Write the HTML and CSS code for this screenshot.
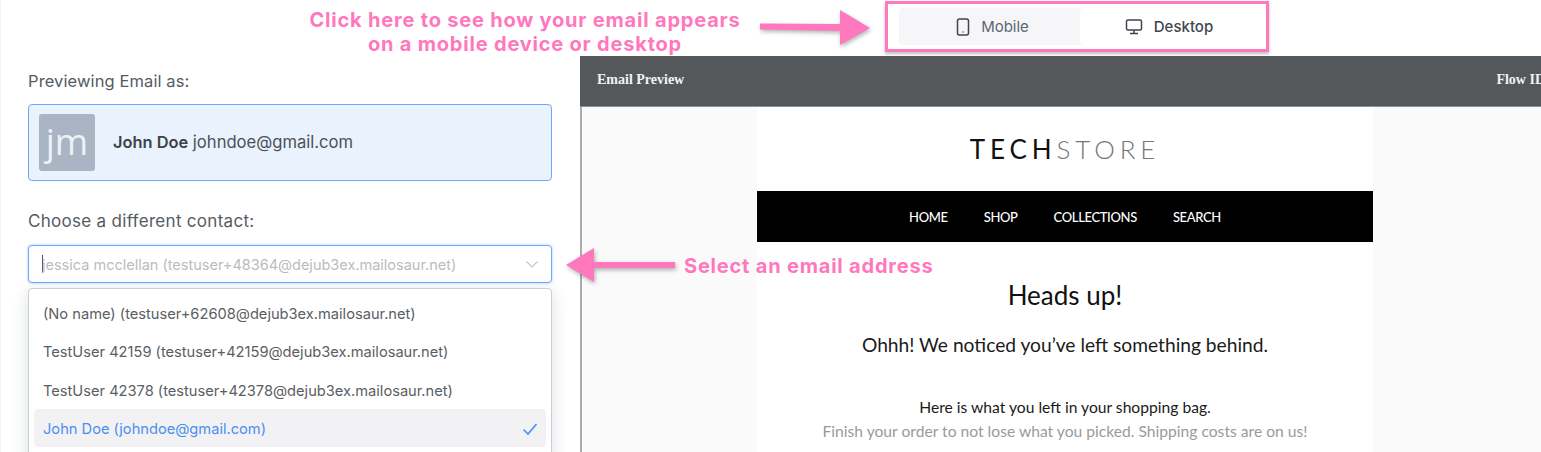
FILE: index.html
```html
<!DOCTYPE html>
<html lang="en">

<head>
    <meta charset="UTF-8">
    <title>Email Preview</title>
    <link rel="stylesheet" href="styles.css">
</head>

<body>
    <div class="app">
        <div class="sidebar">
            <div class="label">Previewing Email as:</div>
            <div class="contact-card">
                <div class="avatar">jm</div>
                <div class="contact-text"><b>John Doe</b> johndoe@gmail.com</div>
            </div>
            <div class="label label-second">Choose a different contact:</div>
            <div class="select-box">
                <span class="caret"></span>
                <span class="select-text">jessica mcclellan (testuser+48364@dejub3ex.mailosaur.net)</span>
                <svg class="chevron" width="14" height="14" viewBox="0 0 14 14" fill="none" stroke="#c4c4c4" stroke-width="1.1">
                    <path d="M1.5 4.5 7 10l5.5-5.5" />
                </svg>
            </div>
            <div class="dropdown">
                <div class="option">(No name) (testuser+62608@dejub3ex.mailosaur.net)</div>
                <div class="option">TestUser 42159 (testuser+42159@dejub3ex.mailosaur.net)</div>
                <div class="option">TestUser 42378 (testuser+42378@dejub3ex.mailosaur.net)</div>
                <div class="option option-active">
                    John Doe (johndoe@gmail.com)
                    <svg width="16" height="14" viewBox="0 0 16 14" fill="none" stroke="#4a8fee" stroke-width="1.6">
                        <path d="M1.5 7.5 6 12 14.5 2" />
                    </svg>
                </div>
            </div>
        </div>

        <div class="preview">
            <div class="preview-top">
                <div class="toggle">
                    <div class="toggle-item toggle-item-off">
                        <svg width="14" height="18" viewBox="0 0 14 18" fill="none" stroke="#3f4650" stroke-width="1.5">
                            <rect x="1.5" y="1" width="11" height="16" rx="2" />
                            <path d="M6.5 14h1" />
                        </svg>
                        Mobile
                    </div>
                    <div class="toggle-item toggle-item-on">
                        <svg width="18" height="16" viewBox="0 0 18 16" fill="none" stroke="#3f4650" stroke-width="1.5">
                            <rect x="1.5" y="1" width="15" height="10" rx="1.5" />
                            <path d="M9 11v3M5 14.5h8" />
                        </svg>
                        Desktop
                    </div>
                </div>
            </div>
            <div class="preview-header">
                <span>Email Preview</span>
                <span>Flow ID</span>
            </div>
            <div class="preview-body">
                <div class="email">
                    <div class="logo"><b>TECH</b>STORE</div>
                    <div class="email-nav">
                        <span>HOME</span>
                        <span>SHOP</span>
                        <span>COLLECTIONS</span>
                        <span>SEARCH</span>
                    </div>
                    <h1>Heads up!</h1>
                    <h2>Ohhh! We noticed you’ve left something behind.</h2>
                    <p>Here is what you left in your shopping bag.</p>
                    <p class="muted">Finish your order to not lose what you picked. Shipping costs are on us!</p>
                </div>
            </div>
        </div>
    </div>

    <!-- annotations on top of the screenshot -->
    <div class="note note-top">Click here to see how your email appears<br>on a mobile device or desktop</div>
    <div class="note note-select">Select an email address</div>
    <div class="pink-box"></div>
    <svg class="arrow arrow-top" width="112" height="44" viewBox="0 0 112 44">
        <path d="M1 20.5 81 21V7L111 25 81 42V28L1 26.5Z" fill="#ff77bd" />
    </svg>
    <svg class="arrow arrow-select" width="116" height="40" viewBox="0 0 116 40">
        <path d="M1 18 29 1V15H110V21H29V35Z" fill="#ff77bd" />
    </svg>
</body>

</html>
```

FILE: styles.css
```css
body {
    margin: 0;
    padding: 0;
    background-color: #fff;
    overflow: hidden;
    font-family: Inter, 'Noto Sans', sans-serif;
    position: relative;
    height: 452px;
}

.app {
    display: flex;
    height: 452px;
    overflow: hidden;
}

.sidebar {
    width: 580px;
    flex-shrink: 0;
    box-sizing: border-box;
    padding: 71px 28px 0 27px;
    border-left: 1px solid #f0f2f5;
    color: #555b63;
}

.label {
    font-size: 16.5px;
    letter-spacing: 0.1px;
    line-height: 20px;
}

.label-second {
    margin-top: 30px;
    font-size: 17px;
    letter-spacing: 0.3px;
}

.contact-card {
    display: flex;
    align-items: center;
    gap: 18px;
    height: 77px;
    box-sizing: border-box;
    margin-top: 13px;
    padding-left: 10px;
    width: 524px;
    background-color: #eaf2fe;
    border: 1px solid #6ea8fe;
    border-radius: 4px;
}

.avatar {
    width: 56px;
    height: 57px;
    background-color: #a9b5c4;
    border-radius: 3px;
    color: #eef1f5;
    font-family: 'Open Sans', sans-serif;
    font-size: 36px;
    line-height: 56px;
    text-align: center;
}

.contact-text {
    font-size: 16.6px;
    line-height: 20px;
    margin-top: -2px;
    color: #4b5158;
}

.contact-text b {
    font-weight: 600;
    font-size: 16.4px;
    color: #3d4248;
}

.select-box {
    display: flex;
    align-items: center;
    box-sizing: border-box;
    width: 524px;
    height: 38px;
    margin-top: 14px;
    padding: 0 12px 0 13px;
    background-color: #fff;
    border: 1px solid #6ea8fe;
    border-radius: 4px;
    box-shadow: 0 0 3px rgba(110, 168, 254, 0.6);
    font-size: 14.5px;
    color: #b9bcc0;
}

.caret {
    width: 1px;
    height: 18px;
    background-color: #555;
    margin-right: -1px;
}

.select-text {
    flex: 1;
    white-space: nowrap;
}

.dropdown {
    box-sizing: border-box;
    width: 524px;
    height: 190px;
    margin-top: 5px;
    padding: 5px;
    background-color: #fff;
    border: 1px solid #c5d0dc;
    border-radius: 4px;
    box-shadow: 0 4px 16px rgba(60, 70, 90, 0.18);
}

.option {
    display: flex;
    justify-content: space-between;
    align-items: center;
    height: 38.3px;
    padding: 2px 8px 0 9px;
    box-sizing: border-box;
    font-size: 14.65px;
    color: #5a5e63;
    white-space: nowrap;
}

.option-active {
    background-color: #f2f2f5;
    color: #4a8fee;
    border-radius: 4px;
}

.preview {
    flex: 1;
    min-width: 0;
    display: flex;
    flex-direction: column;
}

.preview-top {
    height: 56px;
    flex-shrink: 0;
    box-sizing: border-box;
    display: flex;
    padding-left: 319px;
    padding-top: 8px;
}

.toggle {
    display: flex;
    width: 359px;
    height: 37px;
    background-color: #f6f6f9;
    border-radius: 4px;
}

.toggle-item {
    display: flex;
    align-items: center;
    justify-content: center;
    gap: 11px;
    font-size: 15px;
    color: #5b6672;
}

.toggle-item-off {
    flex: 0 0 181px;
    box-sizing: border-box;
    padding-left: 6px;
}

.toggle-item-on {
    flex: 0 0 178px;
    background-color: #fff;
    border-radius: 4px;
    color: #3f4650;
    font-weight: 500;
}

.preview-header {
    height: 51px;
    flex-shrink: 0;
    box-sizing: border-box;
    display: flex;
    justify-content: space-between;
    align-items: center;
    padding: 0 0 2px 17px;
    width: 965px;
    background-color: #54585a;
    border-bottom: 1px solid #8d9092;
    color: #f2f2f2;
    font-family: 'Liberation Serif', serif;
    font-size: 14px;
    font-weight: bold;
    white-space: nowrap;
}

.preview-body {
    flex: 1;
    display: flex;
    justify-content: center;
    width: 968px;
    background-color: #fafafa;
    border-left: 2px solid #a9abad;
    box-sizing: border-box;
}

.email {
    width: 616px;
    background-color: #fff;
    text-align: center;
    color: #1a1a1a;
    font-family: Lato, sans-serif;
}

.logo {
    height: 84px;
    line-height: 85px;
    font-size: 26px;
    font-weight: 300;
    letter-spacing: 4.9px;
    color: #777;
}

.logo b {
    font-weight: 400;
    color: #111;
}

.email-nav {
    display: flex;
    justify-content: center;
    gap: 36px;
    height: 51px;
    align-items: center;
    background-color: #000;
    color: #fff;
    font-size: 13px;
    letter-spacing: -0.35px;
    font-weight: 500;
}

h1 {
    font-size: 26px;
    font-weight: 400;
    line-height: 34px;
    margin: 36px 0 0 0;
    color: #111;
}

h2 {
    font-size: 19.2px;
    font-weight: 400;
    line-height: 24px;
    margin: 21px 0 0 0;
}

p {
    font-size: 15.65px;
    line-height: 24px;
    margin: 0;
}

h2 + p {
    margin-top: 38px;
}

.muted {
    color: #9a9a9a;
}

.note {
    position: absolute;
    color: #ff77bd;
    font-family: Inter, sans-serif;
    font-weight: 700;
    font-size: 20px;
    letter-spacing: 0.8px;
    line-height: 24px;
    text-align: center;
    white-space: nowrap;
}

.note-top {
    left: 309px;
    top: 8px;
    width: 432px;
}

.note-select {
    left: 684px;
    top: 254px;
}

.pink-box {
    position: absolute;
    left: 885px;
    top: 1px;
    width: 378px;
    height: 45px;
    border: 3px solid #ff77bd;
    box-shadow: 0 2px 3px rgba(0, 0, 0, 0.25);
}

.arrow {
    position: absolute;
    filter: drop-shadow(1px 2px 2px rgba(0, 0, 0, 0.3));
}

.arrow-top {
    left: 759px;
    top: 3px;
}

.arrow-select {
    left: 565px;
    top: 247px;
}
```
